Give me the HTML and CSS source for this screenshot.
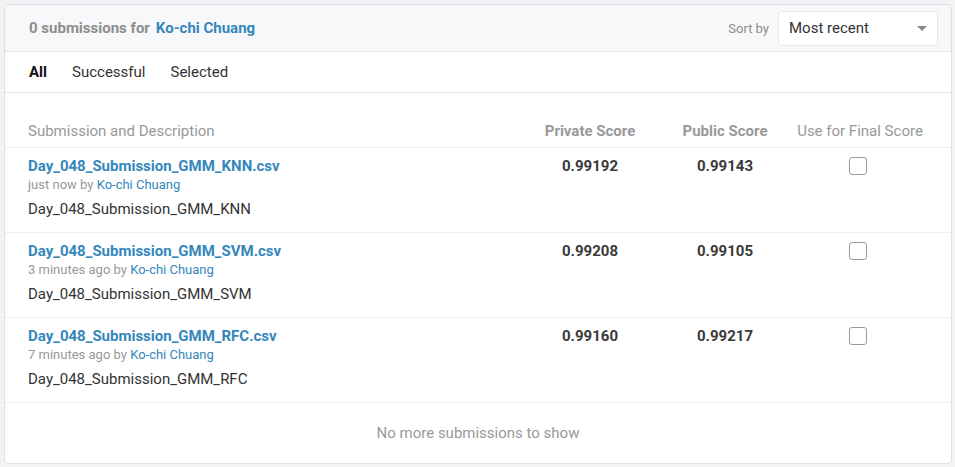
FILE: index.html
```html
<!DOCTYPE html>
<html>
<head>
<meta charset="utf-8">
<link rel="stylesheet" href="styles.css">
</head>
<body>
<div class="card">
  <div class="head">
    <div class="count"><span class="muted">0 submissions for</span><a class="link">Ko-chi Chuang</a></div>
    <div class="sort">
      <span class="sort-label">Sort by</span>
      <div class="select"><span>Most recent</span><span class="caret"></span></div>
    </div>
  </div>
  <div class="tabs">
    <span class="tab active">All</span>
    <span class="tab">Successful</span>
    <span class="tab">Selected</span>
  </div>
  <div class="row colhead">
    <div class="c-desc">Submission and Description</div>
    <div class="c-num bold">Private Score</div>
    <div class="c-num bold">Public Score</div>
    <div class="c-num">Use for Final Score</div>
  </div>
  <div class="row sub">
    <div class="c-desc">
      <a class="file">Day_048_Submission_GMM_KNN.csv</a>
      <div class="meta">just now by <a class="link-sm">Ko-chi Chuang</a></div>
      <div class="desc">Day_048_Submission_GMM_KNN</div>
    </div>
    <div class="c-num score">0.99192</div>
    <div class="c-num score">0.99143</div>
    <div class="c-num"><span class="check"></span></div>
  </div>
  <div class="row sub">
    <div class="c-desc">
      <a class="file">Day_048_Submission_GMM_SVM.csv</a>
      <div class="meta">3 minutes ago by <a class="link-sm">Ko-chi Chuang</a></div>
      <div class="desc">Day_048_Submission_GMM_SVM</div>
    </div>
    <div class="c-num score">0.99208</div>
    <div class="c-num score">0.99105</div>
    <div class="c-num"><span class="check"></span></div>
  </div>
  <div class="row sub">
    <div class="c-desc">
      <a class="file">Day_048_Submission_GMM_RFC.csv</a>
      <div class="meta">7 minutes ago by <a class="link-sm">Ko-chi Chuang</a></div>
      <div class="desc">Day_048_Submission_GMM_RFC</div>
    </div>
    <div class="c-num score">0.99160</div>
    <div class="c-num score">0.99217</div>
    <div class="c-num"><span class="check"></span></div>
  </div>
  <div class="foot">No more submissions to show</div>
</div>
</body>
</html>
```

FILE: styles.css
```css
* { box-sizing: border-box; }
html, body { margin: 0; padding: 0; }
body {
  background: #f1f3f5;
  font-family: Roboto, "Liberation Sans", sans-serif;
  color: #333;
  padding: 4px 4px 0 4px;
}
.card {
  width: 948px;
  height: 460px;
  background: #fff;
  border: 1px solid #dde1e5;
  border-radius: 4px;
  overflow: hidden;
}
.head {
  height: 47px;
  background: #f7f8f9;
  border-bottom: 1px solid #e3e6e8;
  display: flex;
  align-items: center;
  justify-content: space-between;
  padding: 0 13px 0 24px;
}
.count { font-size: 15px; font-weight: 700; }
.muted { color: #8e8e8e; margin-right: 6px; }
.link { color: #3587bb; }
.sort { display: flex; align-items: center; gap: 9px; }
.sort-label { font-size: 13px; color: #8c8c8c; }
.select {
  width: 160px;
  height: 35px;
  background: #fff;
  border: 1px solid #e6e8ea;
  border-radius: 3px;
  display: flex;
  align-items: center;
  justify-content: space-between;
  padding: 0 10px 0 10px;
  font-size: 15px;
  color: #333;
}
.caret {
  width: 0; height: 0;
  border-left: 5px solid transparent;
  border-right: 5px solid transparent;
  border-top: 5px solid #888;
}
.tabs {
  height: 41px;
  border-bottom: 1px solid #e0e3e6;
  display: flex;
  align-items: center;
  padding-left: 24px;
  gap: 25px;
  font-size: 15px;
  color: #333;
}
.tab.active { font-weight: 700; color: #111; }
.row {
  display: grid;
  grid-template-columns: 1fr 140px 130px 140px;
  padding: 0 21px 0 23px;
  border-bottom: 1px solid #eceef0;
}
.colhead {
  padding-top: 28px;
  padding-bottom: 6px;
  font-size: 15px;
  line-height: 20px;
  color: #999;
}
.bold { font-weight: 700; }
.c-num { text-align: center; }
.sub {
  padding-top: 8px;
  padding-bottom: 13px;
}
.file {
  display: block;
  font-size: 15px;
  line-height: 20px;
  font-weight: 700;
  color: #3587bb;
}
.meta {
  font-size: 13px;
  line-height: 17px;
  color: #999;
}
.link-sm { color: #3587bb; }
.desc {
  margin-top: 6px;
  font-size: 15px;
  line-height: 20px;
  color: #333;
}
.score {
  font-size: 15px;
  line-height: 20px;
  font-weight: 700;
  color: #3a3a3a;
}
.check {
  display: inline-block;
  width: 18px;
  height: 18px;
  border: 1.5px solid #9a9a9a;
  border-radius: 3px;
  margin-top: 1px;
  margin-left: -4px;
}
.foot {
  text-align: center;
  font-size: 15px;
  color: #999;
  padding-top: 21px;
}
```
